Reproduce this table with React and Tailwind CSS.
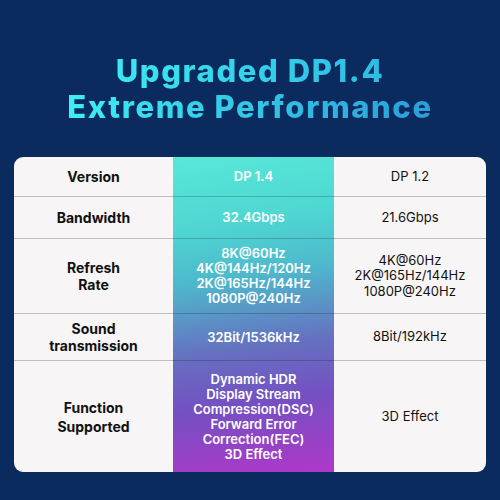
import React from "react";

const font = { fontFamily: "Inter, 'Noto Sans', sans-serif" };

const heights = ["h-[40px]", "h-[42px]", "h-[75px]", "h-[47px]", "h-[111px]"];

const col1 = [
  ["Version"],
  ["Bandwidth"],
  ["Refresh", "Rate"],
  ["Sound", "transmission"],
  ["Function", "Supported"],
];
const col2 = [
  ["DP 1.4"],
  ["32.4Gbps"],
  ["8K@60Hz", "4K@144Hz/120Hz", "2K@165Hz/144Hz", "1080P@240Hz"],
  ["32Bit/1536kHz"],
  ["Dynamic HDR", "Display Stream", "Compression(DSC)", "Forward Error", "Correction(FEC)", "3D Effect"],
];
const col3 = [
  ["DP 1.2"],
  ["21.6Gbps"],
  ["4K@60Hz", "2K@165Hz/144Hz", "1080P@240Hz"],
  ["8Bit/192kHz"],
  ["3D Effect"],
];

function Cell({ h, last, lines, cls, border }) {
  return (
    <div
      className={`${h} flex flex-col items-center justify-center text-center ${
        last ? "" : `border-b ${border}`
      } ${cls}`}
    >
      {lines.map((l, i) => (
        <div key={i}>{l}</div>
      ))}
    </div>
  );
}

export default function App() {
  return (
    <div className="w-[500px] h-[500px] bg-[#0b2a5e] flex flex-col items-center overflow-hidden" style={font}>
      <div className="pt-[53px] text-[31px] leading-[36px] font-extrabold tracking-[1.6px] text-center">
        <div className="bg-[linear-gradient(90deg,#3ef0f4_0%,#2ab4e0_100%)] bg-clip-text text-transparent px-1">
          Upgraded DP1.4
        </div>
        <div className="bg-[linear-gradient(90deg,#3ef0f4_0%,#2a9cd8_100%)] bg-clip-text text-transparent px-1">
          Extreme Performance
        </div>
      </div>
      <div className="mt-[32px] w-[472px] rounded-[9px] bg-[#f7f5f5] flex overflow-hidden">
        <div className="w-[159px] flex flex-col">
          {col1.map((l, i) => (
            <Cell
              key={i}
              h={heights[i]}
              last={i === 4}
              lines={l}
              border="border-[#bdbdbd]"
              cls={`font-bold text-[14px] text-[#111] ${i === 4 ? "leading-[19px]" : "leading-[17px]"}`}
            />
          ))}
        </div>
        <div className="w-[161px] flex flex-col bg-[linear-gradient(172deg,#57e8d8_0%,#4fd6d2_22%,#4db9cc_38%,#6670c0_60%,#7450c2_76%,#b037c9_100%)]">
          {col2.map((l, i) => (
            <Cell
              key={i}
              h={heights[i]}
              last={i === 4}
              lines={l}
              border="border-black/20"
              cls={`text-white font-semibold text-[13px] leading-[15px] ${i === 0 ? "font-medium" : ""}`}
            />
          ))}
        </div>
        <div className="w-[152px] flex flex-col">
          {col3.map((l, i) => (
            <Cell
              key={i}
              h={heights[i]}
              last={i === 4}
              lines={l}
              border="border-[#bdbdbd]"
              cls="text-[#111] text-[13px] leading-[15.5px]"
            />
          ))}
        </div>
      </div>
    </div>
  );
}
